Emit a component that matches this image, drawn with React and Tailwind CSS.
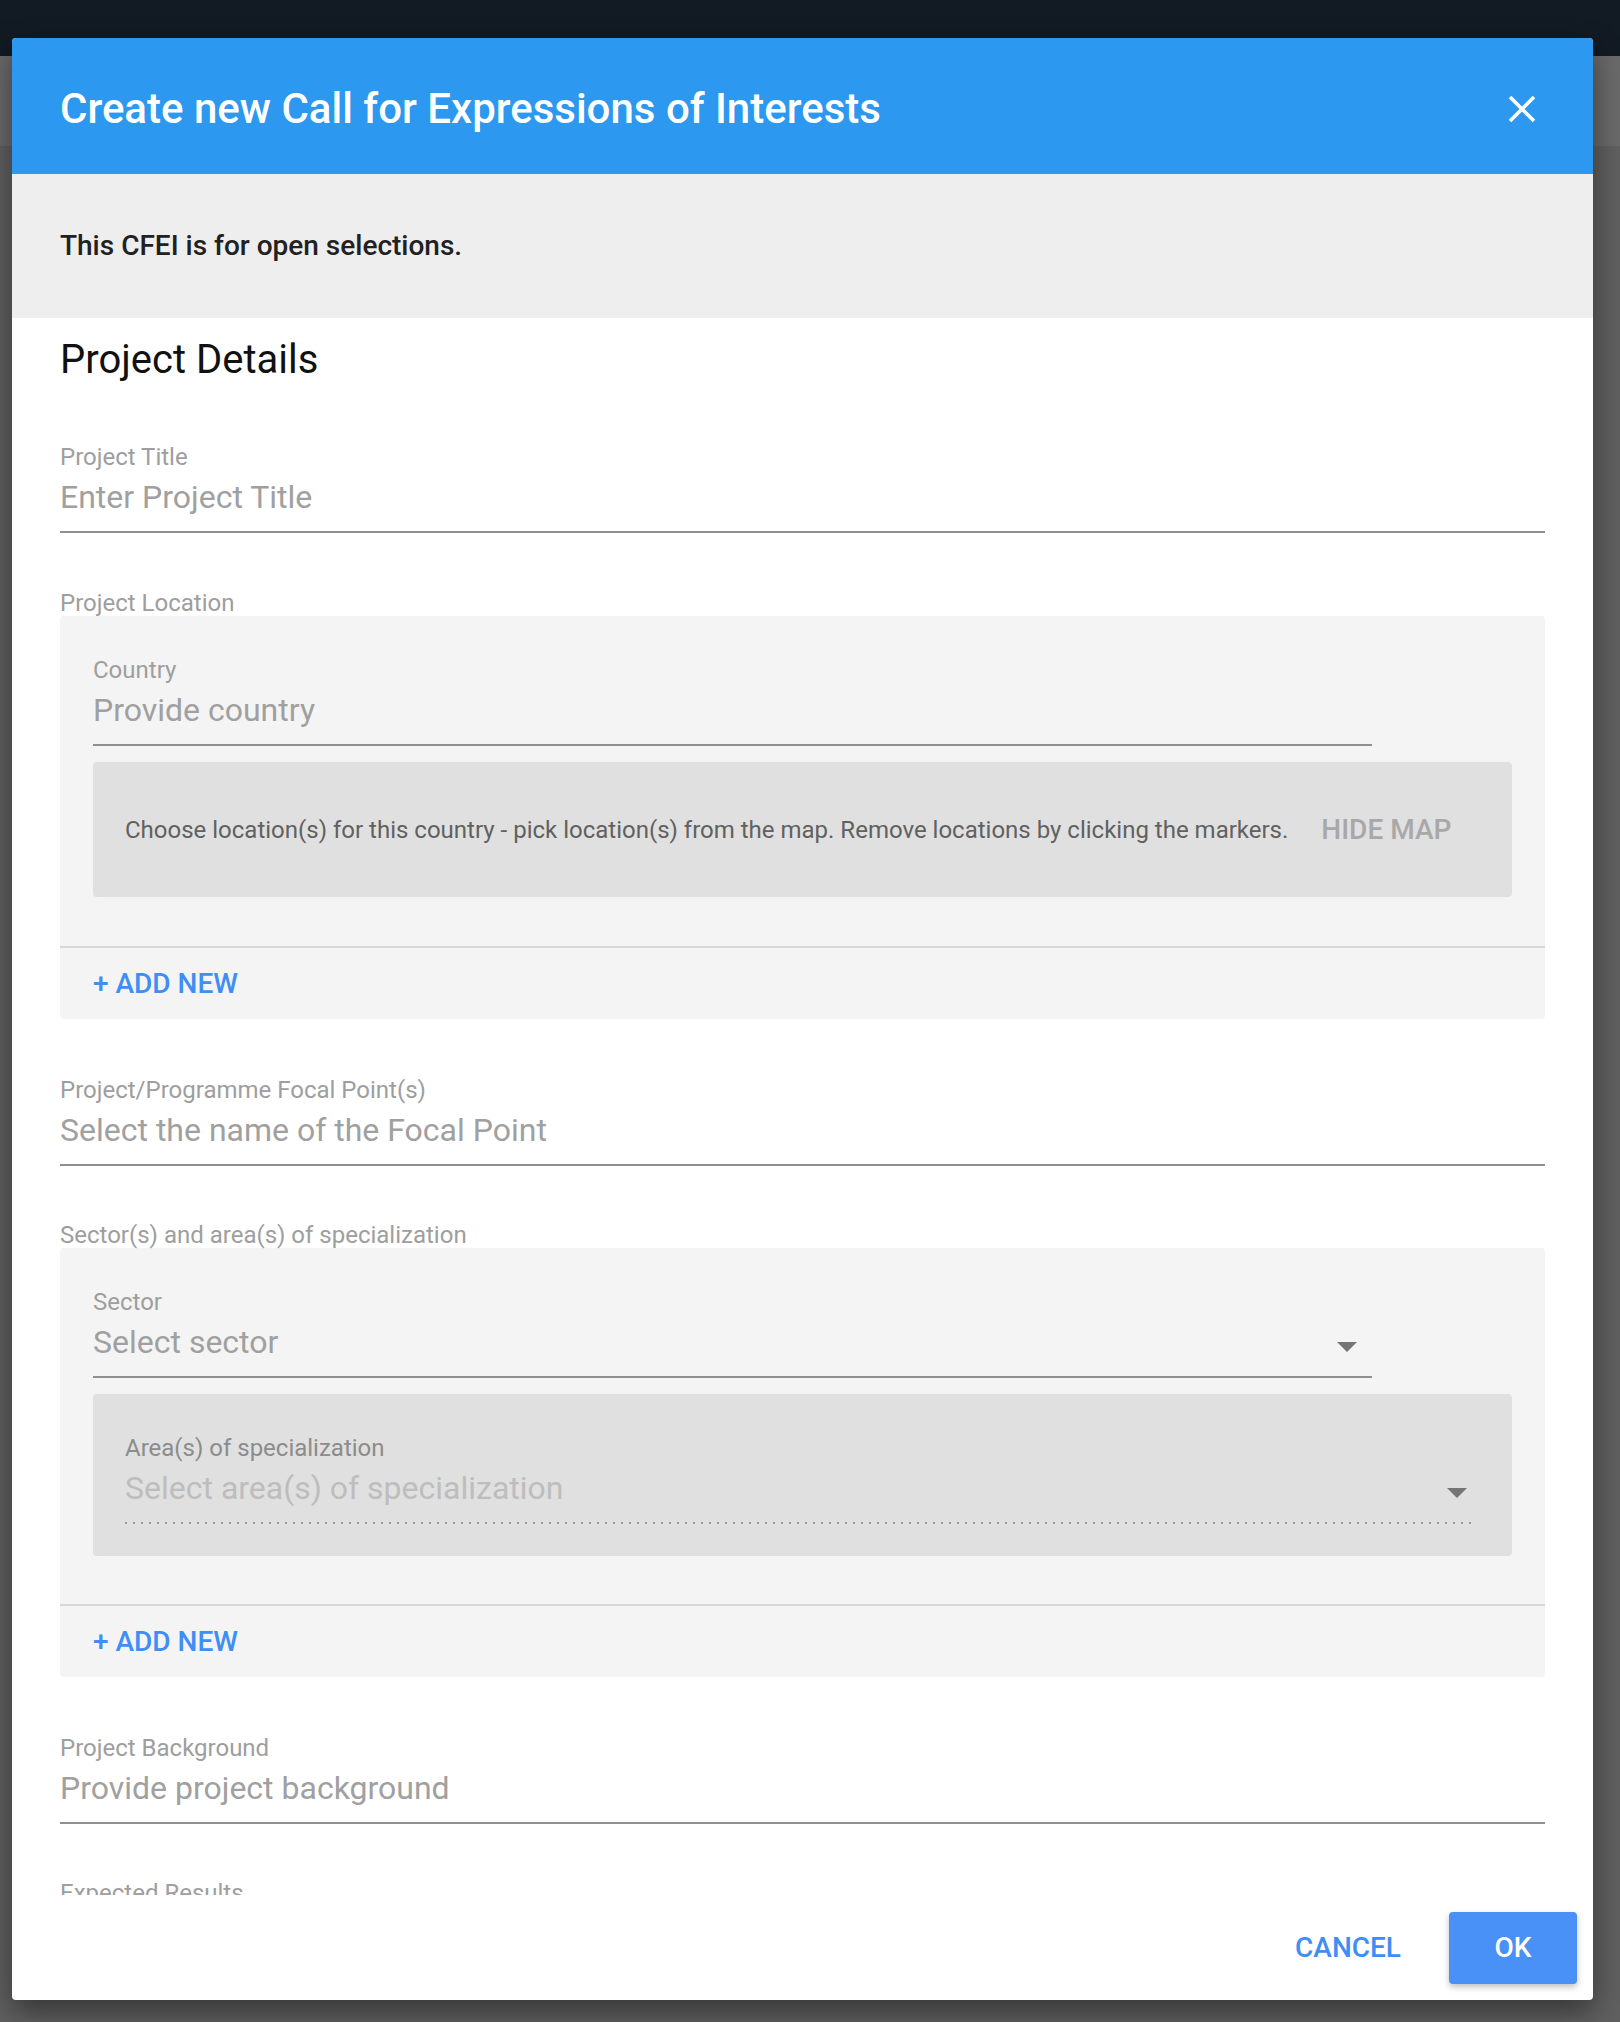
import React from "react";

function Caret({ className = "" }) {
  return (
    <svg width="20" height="10" viewBox="0 0 20 10" className={className}>
      <path d="M0 0 L20 0 L10 10 Z" fill="#757575" />
    </svg>
  );
}

function TextField({ label, placeholder, caret, dotted, className = "" }) {
  return (
    <div className={className}>
      <div
        className={`h-[28px] text-[24px] leading-[28px] ${
          dotted ? "text-[#8c8c8c]" : "text-[#9e9e9e]"
        }`}
      >
        {label}
      </div>
      <div className="mt-[6px] flex h-[40px] items-center justify-between">
        <span
          className={`text-[32px] leading-[40px] ${
            dotted ? "text-[#bdbdbd]" : "text-[#a0a0a0]"
          }`}
        >
          {placeholder}
        </span>
        {caret}
      </div>
      {dotted ? (
        <div className="mt-[14px] h-[2px] bg-[linear-gradient(to_right,#9a9a9a_25%,transparent_0%)] bg-[length:8px_2px] bg-repeat-x" />
      ) : (
        <div className="mt-[14px] h-[2px] bg-[#8f8f8f]" />
      )}
    </div>
  );
}

function SectionLabel({ children, className = "" }) {
  return (
    <div className={`h-[26px] text-[24px] leading-[26px] text-[#9e9e9e] ${className}`}>
      {children}
    </div>
  );
}

function AddNew() {
  return (
    <>
      <div className="h-[2px] bg-[#d8d8d8]" />
      <div className="flex h-[71px] items-center px-[33px]">
        <button className="text-[28px] font-medium leading-none text-[#3f8ef4]">
          + ADD NEW
        </button>
      </div>
    </>
  );
}

export default function App() {
  return (
    <div className="relative h-[2022px] w-full overflow-hidden bg-[#606060] font-['Roboto','Liberation_Sans',sans-serif]">
      {/* page behind the overlay */}
      <div className="h-[56px] bg-[#121a23]" />
      <div className="h-[90px] bg-[#6a6a6a]" />

      {/* DIALOG */}
      <div className="absolute left-[12px] top-[38px] flex h-[1962px] w-[1581px] flex-col overflow-hidden rounded-[4px] bg-white shadow-[0_12px_30px_rgba(0,0,0,0.45)]">
        {/* header */}
        <div className="flex h-[136px] shrink-0 items-center justify-between bg-[#2c98ef] pl-[48px] pr-[57px] pt-[6px]">
          <h1 className="text-[42px] font-medium leading-[50px] text-white">
            Create new Call for Expressions of Interests
          </h1>
          <svg width="28" height="28" viewBox="0 0 28 28">
            <path d="M2 2 L26 26 M26 2 L2 26" stroke="white" strokeWidth="3.6" />
          </svg>
        </div>

        {/* info band */}
        <div className="flex h-[144px] shrink-0 items-center bg-[#eeeeee] px-[48px]">
          <p className="text-[28px] font-medium text-[#212121]">
            This CFEI is for open selections.
          </p>
        </div>

        {/* scrolling content */}
        <div className="flex-1 overflow-hidden px-[48px] pt-[18px]">
          <h2 className="text-[40px] leading-[48px] text-[#111]">Project Details</h2>

          <TextField
            className="mt-[59px]"
            label="Project Title"
            placeholder="Enter Project Title"
          />

          <SectionLabel className="mt-[57px]">Project Location</SectionLabel>
          <div className="rounded-[4px] bg-[#f4f4f4]">
            <div className="px-[33px] pt-[40px]">
              <TextField
                className="w-[1279px]"
                label="Country"
                placeholder="Provide country"
              />
              <div className="mt-[16px] flex h-[135px] items-center rounded-[4px] bg-[#e0e0e0] px-[32px]">
                <span className="whitespace-nowrap text-[24px] text-[#616161]">
                  Choose location(s) for this country - pick location(s) from the map. Remove
                  locations by clicking the markers.
                </span>
                <button className="shrink-0 whitespace-nowrap px-[33px] text-[28px] font-medium text-[#a8a8a8]">
                  HIDE MAP
                </button>
              </div>
              <div className="h-[49px]" />
            </div>
            <AddNew />
          </div>

          <TextField
            className="mt-[57px]"
            label="Project/Programme Focal Point(s)"
            placeholder="Select the name of the Focal Point"
          />

          <SectionLabel className="mt-[56px]">
            Sector(s) and area(s) of specialization
          </SectionLabel>
          <div className="rounded-[4px] bg-[#f4f4f4]">
            <div className="px-[33px] pt-[40px]">
              <TextField
                className="w-[1279px]"
                label="Sector"
                placeholder="Select sector"
                caret={<Caret className="mr-[15px] mt-[10px]" />}
              />
              <div className="mt-[16px] rounded-[4px] bg-[#e0e0e0] pb-[32px] pl-[32px] pr-[37px] pt-[40px]">
                <TextField
                  dotted
                  label="Area(s) of specialization"
                  placeholder="Select area(s) of specialization"
                  caret={<Caret className="mr-[8px] mt-[10px]" />}
                />
              </div>
              <div className="h-[48px]" />
            </div>
            <AddNew />
          </div>

          <TextField
            className="mt-[57px]"
            label="Project Background"
            placeholder="Provide project background"
          />

          <SectionLabel className="mt-[56px]">Expected Results</SectionLabel>
        </div>

        {/* footer */}
        <div className="flex h-[105px] shrink-0 items-center justify-end gap-[32px] pr-[16px]">
          <button className="px-[16px] text-[28px] font-medium text-[#3f8ef4]">CANCEL</button>
          <button className="h-[72px] w-[128px] rounded-[4px] bg-[#4990f7] text-[28px] font-medium text-white shadow-[0_3px_6px_rgba(0,0,0,0.25)]">
            OK
          </button>
        </div>
      </div>
    </div>
  );
}
